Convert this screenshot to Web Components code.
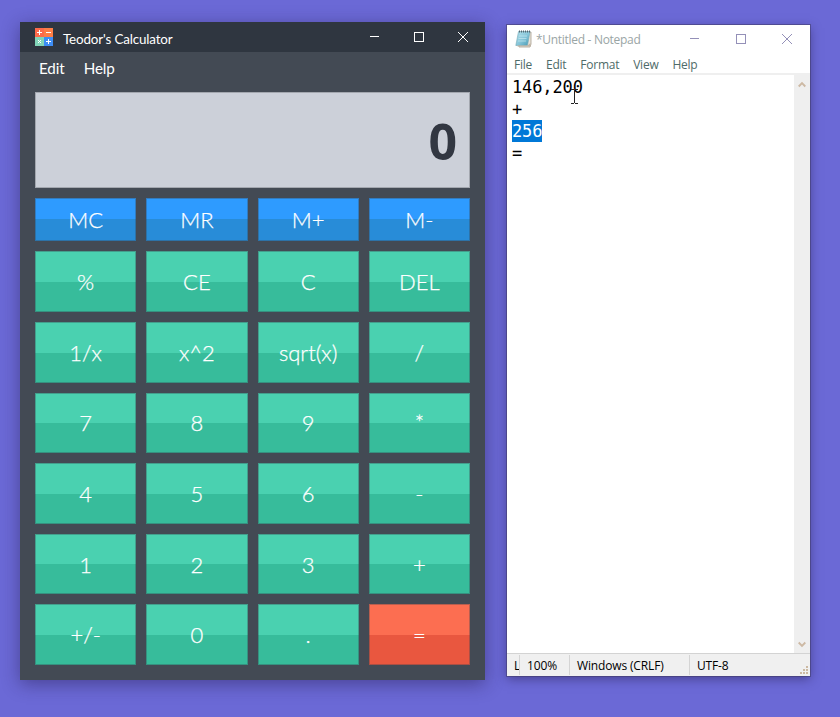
<!DOCTYPE html>
<html lang="en">
<head>
<meta charset="utf-8">
<title>Teodor's Calculator</title>
<style>
html,body{margin:0;height:100%}
body{background:#6b69d6;overflow:hidden}
</style>
</head>
<body>
<desk-top></desk-top>
<script>
const define = (name, html) => customElements.define(name, class extends HTMLElement {
  constructor() {
    super();
    const t = document.createElement('template');
    t.innerHTML = html;
    this.attachShadow({ mode: 'open' }).appendChild(t.content.cloneNode(true));
  }
});

define('window-controls', `
<style>
:host{display:flex;gap:34px;color:var(--glyph,#fff)}
svg{display:block;width:10px;height:10px;fill:none;stroke:currentColor;stroke-width:1}
</style>
<svg viewBox="0 0 10 10" shape-rendering="crispEdges"><path d="M0 4.500H9"/></svg>
<svg viewBox="0 0 10 10" shape-rendering="crispEdges"><path d="M.5.5h9v9h-9z"/></svg>
<svg viewBox="0 0 10 10"><path d="M0 0L10 10M10 0L0 10"/></svg>`);

define('calc-logo', `
<style>:host{display:block;width:18px;height:18px}svg{display:block}</style>
<svg width="18" height="18" viewBox="0 0 18 18">
<path fill="#fd6a4b" d="M0 0h9v9H0z"/><path fill="#fd7d45" d="M9 0h9v9H9z"/>
<path fill="#82d5b9" d="M0 9h9v9H0z"/><path fill="#3d8df5" d="M9 9h9v9H9z"/>
<g stroke="#fff" fill="none"><path d="M2 4.500h5M4.500 2v5M11 4.500h5M11 13.500h5M13.500 11v5M3 12l3 3M6 12l-3 3"/></g>
</svg>`);

define('note-logo', `
<style>:host{display:block;width:17px;height:18px}svg{display:block}</style>
<svg width="17" height="18" viewBox="0 0 17 18">
<defs><linearGradient id="g" x2="1" y2="1"><stop stop-color="#b4e1ec"/><stop offset=".55" stop-color="#83c4d8"/><stop offset="1" stop-color="#4799b4"/></linearGradient></defs>
<path d="M4.500 2H16v12l-1 3H4z" fill="#e9e3da" stroke="#a79e91" stroke-width=".8"/>
<path d="M3.500 1.500H15L12.500 15.500H.8z" fill="url(#g)" stroke="#76a9b7" stroke-width=".6"/>
<path d="M12.500 15.500L15.500 13v3.500H2.500v-1z" fill="#c3b6a5"/>
<path d="M4 6h8M3.500 8.500h8M3 11h8" stroke="#d1edf3" stroke-width=".6"/>
<path d="M4 1.500h11" stroke="#526670" stroke-width="2" stroke-dasharray="1 1"/>
</svg>`);

define('calc-key', `
<style>
:host{display:flex;align-items:center;justify-content:center;box-sizing:border-box;
 --hi:#4ad1b0;--lo:#37bc9b;
 background:linear-gradient(var(--hi) 50%,var(--lo) 50%);
 border:.67px solid rgba(55,65,78,.35);background-origin:border-box;
 color:#fff;font:300 22px/26px Lato,sans-serif;padding-top:1px;-webkit-text-stroke:.25px #fff}
:host([tone=memory]){--hi:#2e9bff;--lo:#288cd8;padding-top:0}
:host([tone=equals]){--hi:#fc6e51;--lo:#e9573f}
</style><slot></slot>`);

define('calc-window', `
<style>
:host{display:flex;flex-direction:column;box-sizing:border-box;width:465px;height:658px;background:#434a54;
 color:#fff;font-family:Lato,sans-serif;box-shadow:0 4px 17px rgba(35,25,75,.48)}
header{display:flex;align-items:center;height:30px;padding:0 17px 0 15px;background:#2f3640}
calc-logo{flex:none}
h1{font:400 13.400px/18px Lato,sans-serif;letter-spacing:-.15px;margin:3px auto 0 10px}
nav{display:flex;gap:19px;height:31px;padding:0 19px;align-items:center;font-size:15.200px;letter-spacing:-.1px}
output{display:flex;box-sizing:border-box;margin:9px 15px 10px;height:96px;border:1px solid #a3a7af;background:#ccd0d9;color:#323742;
 align-items:center;justify-content:flex-end;padding:1px 12px 0;font:700 50px/60px "Open Sans",sans-serif}
main{display:grid;grid-template-columns:repeat(4,1fr);grid-template-rows:43.300px repeat(6,1fr);gap:10px;flex:1;min-height:0;margin:0 15px 15px}
</style>
<header><calc-logo></calc-logo><h1>Teodor's Calculator</h1><window-controls></window-controls></header>
<nav><span>Edit</span><span>Help</span></nav>
<output>0</output>
<main>
${['MC','MR','M+','M-','%','CE','C','DEL','1/x','x^2','sqrt(x)','/','7','8','9','*','4','5','6','-','1','2','3','+','+/-','0','.','=']
  .map((k, i) => `<calc-key${i < 4 ? ' tone="memory"' : k === '=' ? ' tone="equals"' : ''}>${k}</calc-key>`).join('')}
</main>`);

define('note-window', `
<style>
:host{display:flex;flex-direction:column;position:relative;width:303px;height:651px;background:#fff;
 box-shadow:0 0 0 1px rgba(65,60,105,.55),0 3px 10px rgba(35,25,75,.5);font-family:"Open Sans",sans-serif;--glyph:#9490b8}
header{display:flex;align-items:center;height:30px;padding:0 18px 0 8px}
note-logo{margin-top:-2px}
h1{font:400 12px/16px "Open Sans",sans-serif;letter-spacing:-.3px;color:#9aa5a5;margin:0 auto 0 4px;white-space:nowrap}
window-controls{gap:36px;margin:-2px 0 0}
nav{display:flex;height:20px;gap:14px;padding:0 7px;align-items:center;font-size:12px;letter-spacing:-.25px;color:#4e6b68;border-bottom:2px solid #efefef;box-sizing:border-box;line-height:20px}
nav span{position:relative;top:1px}
main{display:flex;flex:1;justify-content:space-between}
pre{margin:0;padding:1px 5px;font:17px/22px "DejaVu Sans Mono",monospace;letter-spacing:-.12px;color:#000}
mark{display:inline-block;background:#0078d7;color:#fff;height:22px}
aside{display:flex;flex-direction:column;justify-content:space-between;width:16px;background:#efefef;box-sizing:border-box;padding:6px 4px 5px}
aside svg{display:block}
footer{display:flex;align-items:center;height:23px;box-sizing:border-box;background:#f0f0f0;border-top:1px solid #d3d3d3;font-size:12px;letter-spacing:-.15px;color:#000}
footer span{box-sizing:border-box;height:20px;line-height:21px;padding-left:7px;border-right:1px solid #d4d4d4;white-space:nowrap}
footer span:nth-child(1){width:13px;overflow:hidden}
footer span:nth-child(2){width:50px}
footer span:nth-child(3){width:120px}
footer span:nth-child(4){border:0;flex:1}
.grip{align-self:flex-end;margin:0 2px 2px 0}
.caret{position:absolute;left:64px;top:64px}
</style>
<header><note-logo></note-logo><h1>*Untitled - Notepad</h1><window-controls></window-controls></header>
<nav><span>File</span><span>Edit</span><span>Format</span><span>View</span><span>Help</span></nav>
<main><pre>146,200
+
<mark>256</mark>
=</pre>
<aside><svg width="8" height="7" viewBox="0 0 8 7"><path d="M.7 5.500L4 2.200l3.300 3.300" fill="none" stroke="#cdb9a4" stroke-width="1.900"/></svg><svg width="8" height="7" viewBox="0 0 8 7"><path d="M.7 1.500L4 4.800l3.300-3.300" fill="none" stroke="#cdb9a4" stroke-width="1.900"/></svg></aside></main>
<footer><span>L</span><span>100%</span><span>Windows (CRLF)</span><span>UTF-8</span>
<svg class="grip" width="8" height="8" viewBox="0 0 8 8" fill="#ccb9a2"><path d="M0 6h2v2H0zM3 6h2v2H3zM6 6h2v2H6zM3 3h2v2H3zM6 3h2v2H6zM6 0h2v2H6z"/></svg></footer>
<svg class="caret" width="7" height="15" viewBox="0 0 7 15" shape-rendering="crispEdges"><path d="M0 .5h3M4 .5h3M3.500 1v13M0 14.500h3M4 14.500h3" stroke="#222" fill="none"/></svg>`);

define('desk-top', `
<style>
:host{display:flex;align-items:flex-start;gap:22px;box-sizing:border-box;width:840px;height:717px;padding:22px 20px;background:#6b69d6;overflow:hidden}
note-window{margin-top:3px}
</style>
<calc-window></calc-window><note-window></note-window>`);
</script>
</body>
</html>
